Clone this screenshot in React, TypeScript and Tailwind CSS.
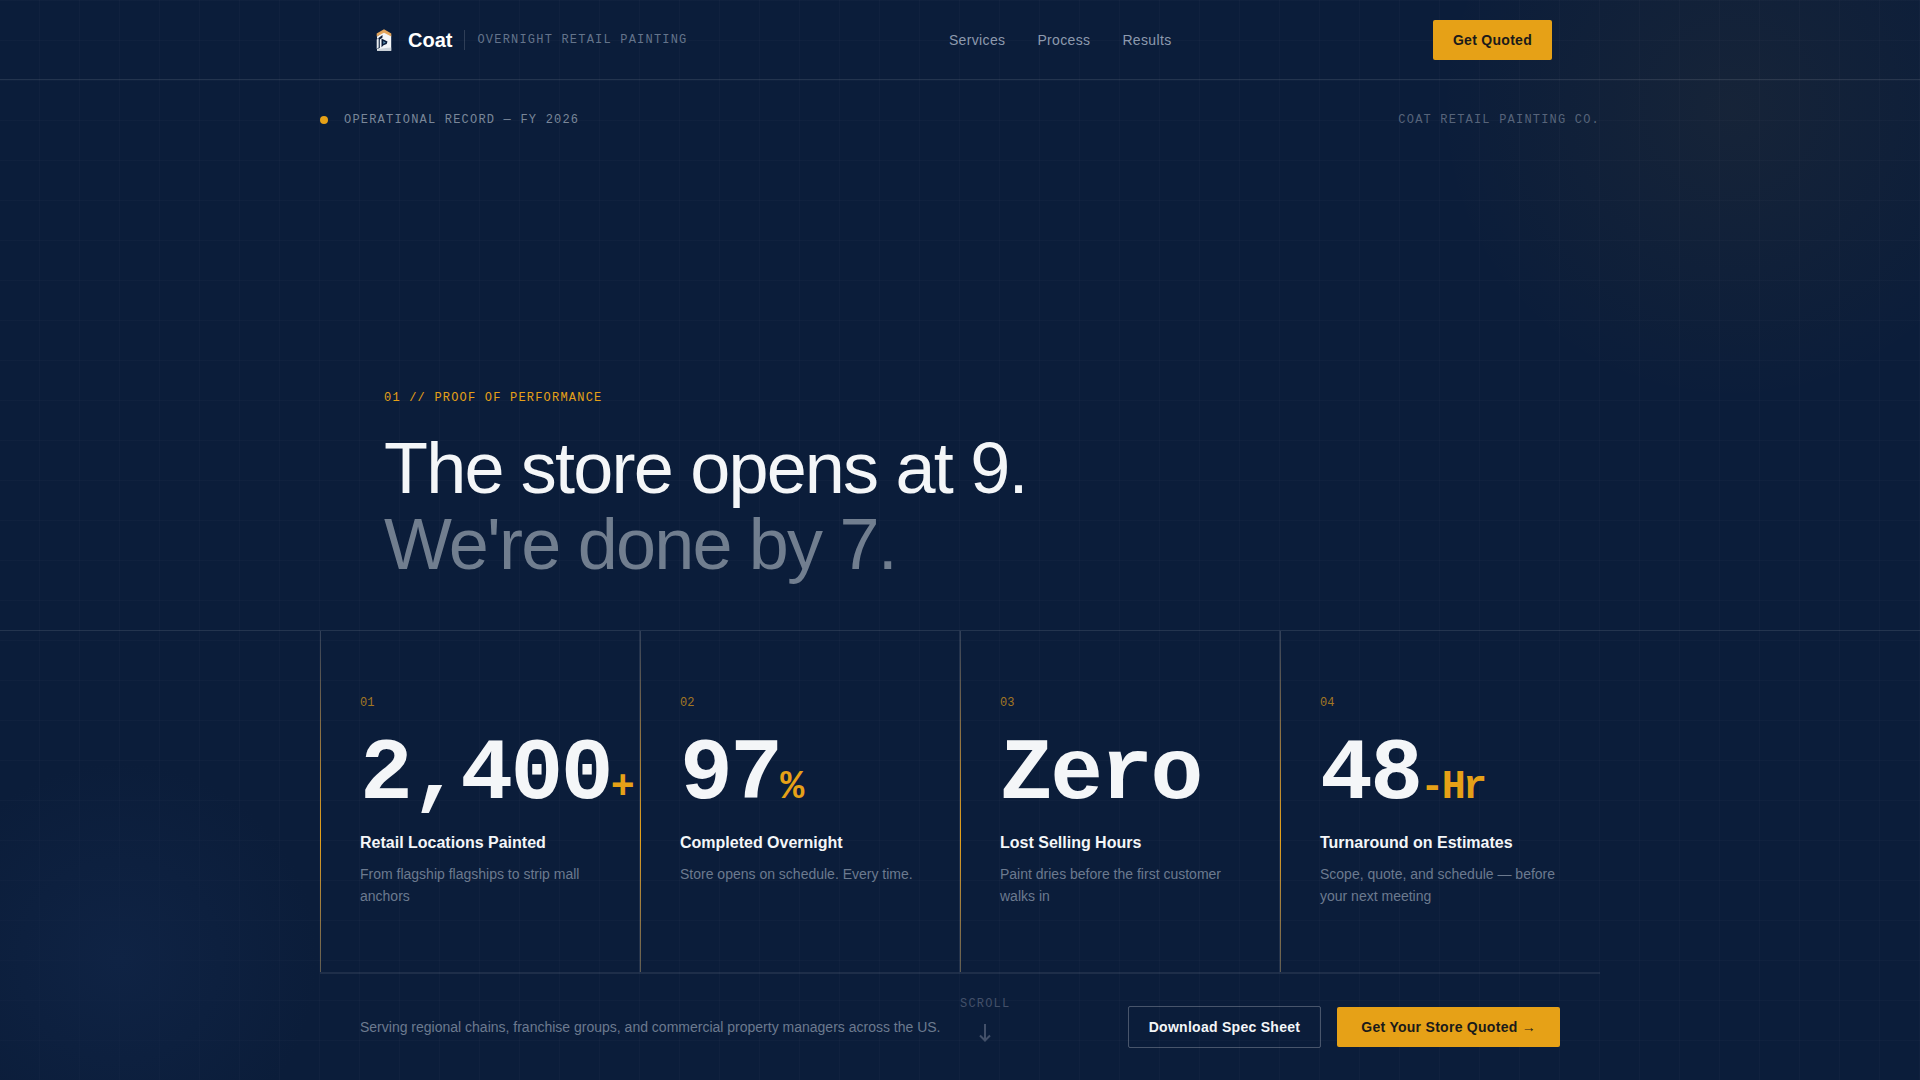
import React from 'react';

const mono = "font-['Liberation_Mono',monospace]";

const navLinks = ['Services', 'Process', 'Results'];

const stats = [
    {
        id: '01',
        value: '2,400',
        suffix: '+',
        title: 'Retail Locations Painted',
        text: 'From flagship flagships to strip mall anchors',
    },
    {
        id: '02',
        value: '97',
        suffix: '%',
        title: 'Completed Overnight',
        text: 'Store opens on schedule. Every time.',
    },
    {
        id: '03',
        value: 'Zero',
        suffix: '',
        title: 'Lost Selling Hours',
        text: 'Paint dries before the first customer walks in',
    },
    {
        id: '04',
        value: '48',
        suffix: '-Hr',
        title: 'Turnaround on Estimates',
        text: 'Scope, quote, and schedule — before your next meeting',
    },
];

const Logo: React.FC = () => (
    <svg viewBox="0 0 32 32" className="size-8" aria-hidden="true">
        <path d="M9 12.500 16 7.500l7.200 4V26.800H9z" fill="#f4f6f8" />
        <path d="M8.700 12.500V9.500L16 5.300l7.300 4.200v2.900L16 8.700z" fill="#e3a55c" />
        <path d="M9 15 14.500 11v2.500l-2.700 2V24L9 25z" fill="#0b1d3a" />
        <path d="M8.700 15.500l2-1.300v9.300l-2 1.500z" fill="#e8ecf0" />
        <path d="M13.500 14.500l6 3-.8 2.500-3.200 1.200-2 2z" fill="#0b1d3a" />
        <path d="M15.300 17v3l2.500-1.600z" fill="#5f93b3" />
        <path d="M9 25.500l6-1.300 8.200-.7v3.300H9z" fill="#cfd6dc" />
    </svg>
);

const Header: React.FC = () => (
    <header className="relative border-b border-white/10">
        <div className="mx-auto flex max-w-7xl items-center justify-between px-12 pt-5 pb-[19px]">
            <div className="flex items-center gap-3">
                <a href="#top" className="flex items-center gap-2">
                    <Logo />
                    <span className="text-xl font-bold text-white">Coat</span>
                </a>
                <span className="h-5 w-px bg-white/15" />
                <span className={`${mono} text-xs tracking-widest uppercase text-[#64748b]`}>
                    Overnight Retail Painting
                </span>
            </div>
            <nav className="flex items-center gap-8">
                {navLinks.map((label) => (
                    <a key={label} href={`#${label.toLowerCase()}`} className="text-sm tracking-wide text-[#8d9aae]">
                        {label}
                    </a>
                ))}
            </nav>
            <button
                type="button"
                className="h-10 rounded-xs bg-[#e6a117] px-5 text-sm font-bold tracking-[0.02em] text-[#1a1a1a]"
            >
                Get Quoted
            </button>
        </div>
    </header>
);

const StatCard: React.FC<{ stat: (typeof stats)[number] }> = ({ stat }) => (
    <div className="flex border-r border-b border-white/8 last:border-r-0">
        <span className="w-px shrink-0 bg-linear-to-b from-white/15 via-[#e6a117] via-60% to-[#d8b878]/40" />
        <div className="min-w-0 pt-16 pr-10 pb-[65px] pl-[39px]">
            <div className={`${mono} text-xs text-[#e6a117]/70`}>{stat.id}</div>
            <div
                className={`${mono} mt-5 text-[88px] leading-none font-bold tracking-[-0.03em] whitespace-nowrap text-[#f4f6f8]`}
            >
                {stat.value}
                <span className="text-[40px] text-[#e6a117]">{stat.suffix}</span>
            </div>
            <h2 className="mt-3 text-base font-bold text-[#f4f6f8]">{stat.title}</h2>
            <p className="mt-2 text-sm leading-[22px] text-[#6c7a8f]">{stat.text}</p>
        </div>
    </div>
);

export default function App() {
    return (
        <div
            id="top"
            className="relative flex min-h-screen flex-col overflow-hidden bg-[#0b1d3a] font-['Liberation_Sans',Arial,sans-serif]"
        >
            {/* Blueprint grid */}
            <div className="absolute inset-0 bg-[repeating-linear-gradient(0deg,transparent_0_39px,rgba(255,255,255,0.018)_39px_40px),repeating-linear-gradient(90deg,transparent_0_39px,rgba(255,255,255,0.018)_39px_40px)]" />
            {/* Corner glows */}
            <div className="absolute -top-48 -right-28 size-[600px] rounded-full bg-[radial-gradient(circle,rgba(230,161,23,0.05)_0%,transparent_70%)]" />
            <div className="absolute -bottom-20 -left-20 size-[400px] rounded-full bg-[radial-gradient(circle,#0f2344_0%,transparent_70%)]" />

            <Header />

            <div className="relative mx-auto flex w-full max-w-7xl items-center justify-between pt-8">
                <div className="flex items-center gap-4">
                    <span className="size-2 rounded-full bg-[#e6a117]" />
                    <span className={`${mono} text-xs tracking-widest uppercase text-[#7a8799]`}>
                        Operational Record — FY 2026
                    </span>
                </div>
                <span className={`${mono} text-xs tracking-widest uppercase text-[#57647a]`}>
                    Coat Retail Painting Co.
                </span>
            </div>

            <main className="relative flex grow flex-col justify-end">
                <div className="mx-auto w-full max-w-7xl px-16 pb-12">
                    <p className={`${mono} mb-6 text-xs tracking-widest uppercase text-[#e6a117]`}>
                        01 // Proof of Performance
                    </p>
                    <h1 className="text-7xl leading-[76px] tracking-tight text-[#f4f6f8]">
                        The store opens at 9.
                        <br />
                        <span className="text-[#717e8f]">We're done by 7.</span>
                    </h1>
                </div>

                <section className="border-t border-white/10">
                    <div className="mx-auto grid max-w-7xl grid-cols-4">
                        {stats.map((stat) => (
                            <StatCard key={stat.id} stat={stat} />
                        ))}
                    </div>
                </section>
            </main>

            <footer className="relative mx-auto flex w-full max-w-7xl items-center justify-between border-t border-white/8 px-10 py-8">
                <p className="text-sm text-[#6c7a8f]">
                    Serving regional chains, franchise groups, and commercial property managers across the US.
                </p>
                <div className="flex items-center gap-4">
                    <button
                        type="button"
                        className="rounded-xs border border-white/25 px-5 py-[10px] text-sm font-bold tracking-[0.02em] text-[#f4f6f8]"
                    >
                        Download Spec Sheet
                    </button>
                    <button
                        type="button"
                        className="rounded-xs bg-[#e6a117] px-6 py-[10px] text-sm font-bold tracking-[0.02em] text-[#1a1a1a]"
                    >
                        Get Your Store Quoted →
                    </button>
                </div>
            </footer>

            {/* Scroll cue */}
            <div className="absolute bottom-9 left-1/2 flex flex-col items-center gap-2 text-[#435069]">
                <span className={`${mono} text-xs tracking-widest uppercase`}>Scroll</span>
                <svg width="16" height="24" viewBox="0 0 16 24" fill="none" stroke="currentColor" strokeWidth="2">
                    <path d="M8 4v17M3 15.500l5 5 5-5" />
                </svg>
            </div>
        </div>
    );
}
